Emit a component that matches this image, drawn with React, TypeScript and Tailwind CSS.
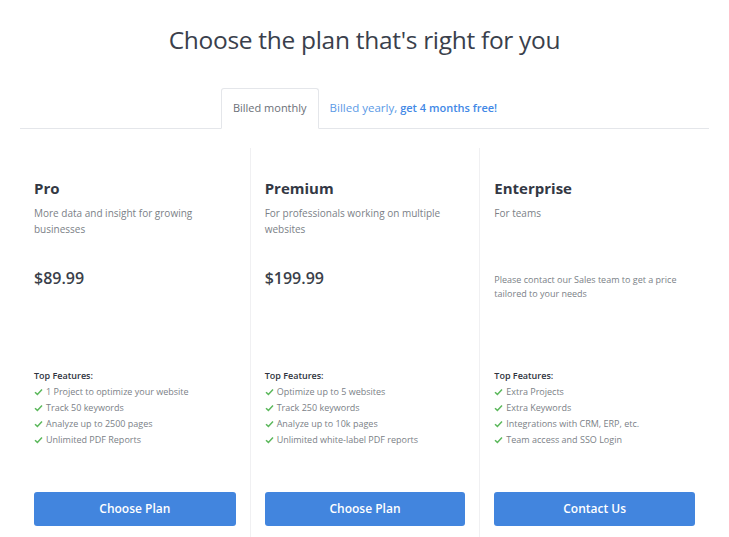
import React from "react";

type Plan = {
  name: string;
  blurb: string;
  price?: string;
  note?: string;
  features: string[];
  cta: string;
};

const PLANS: Plan[] = [
  {
    name: "Pro",
    blurb: "More data and insight for growing businesses",
    price: "$89.99",
    features: [
      "1 Project to optimize your website",
      "Track 50 keywords",
      "Analyze up to 2500 pages",
      "Unlimited PDF Reports",
    ],
    cta: "Choose Plan",
  },
  {
    name: "Premium",
    blurb: "For professionals working on multiple websites",
    price: "$199.99",
    features: [
      "Optimize up to 5 websites",
      "Track 250 keywords",
      "Analyze up to 10k pages",
      "Unlimited white-label PDF reports",
    ],
    cta: "Choose Plan",
  },
  {
    name: "Enterprise",
    blurb: "For teams",
    note: "Please contact our Sales team to get a price tailored to your needs",
    features: [
      "Extra Projects",
      "Extra Keywords",
      "Integrations with CRM, ERP, etc.",
      "Team access and SSO Login",
    ],
    cta: "Contact Us",
  },
];

function Check() {
  return (
    <svg width="9" height="8" viewBox="0 0 9 8" className="shrink-0">
      <path d="M1 4.2 L3.4 6.4 L8 1.4" fill="none" stroke="#5cb85c" strokeWidth="1.5" />
    </svg>
  );
}

function PlanColumn({ plan, first }: { plan: Plan; first: boolean }) {
  return (
    <div className={`flex flex-col px-[14px] pt-[30px] pb-[11px] ${first ? "" : "border-l border-[#f0f0f2]"}`}>
      <h2 className="text-[15px] leading-[20px] font-bold text-[#333844]">{plan.name}</h2>
      <p className="mt-[7px] h-[48px] text-[10px] leading-[16px] text-[#7b7f87]">{plan.blurb}</p>
      <div className="h-[84px]">
        {plan.price ? (
          <div className="mt-[13px] text-[16px] leading-[24px] font-semibold text-[#3b3f4a]">{plan.price}</div>
        ) : (
          <p className="mt-[20px] text-[9px] leading-[14px] text-[#7b7f87]">{plan.note}</p>
        )}
      </div>
      <div className="mt-[31px] text-[9px] leading-[16px] font-semibold text-[#2f3440]">Top Features:</div>
      <ul className="flex flex-col">
        {plan.features.map((f) => (
          <li key={f} className="flex items-center gap-[3px] text-[9px] leading-[16px] text-[#7b7f87]">
            <Check />
            {f}
          </li>
        ))}
      </ul>
      <button className="mt-[44px] h-[34px] w-full rounded-[3px] bg-[#4285de] text-[12px] font-semibold text-white">
        {plan.cta}
      </button>
    </div>
  );
}

export default function App() {
  return (
    <div className="min-h-[537px] bg-white px-5 font-['Open_Sans',sans-serif]">
      <h1 className="pt-[22px] text-center text-[24.5px] leading-[36px] text-[#3a3f4c] tracking-[-0.3px]">
        Choose the plan that's right for you
      </h1>
      <div className="mt-[30px] flex justify-center border-b border-[#e4e6ea]">
        <div className="-mb-px h-[41px] rounded-t-[3px] border border-b-white border-[#e4e6ea] bg-white px-[11px] flex items-center text-[11px] text-[#6b6f77]">
          Billed monthly
        </div>
        <div className="h-[40px] px-[11px] flex items-center text-[11.5px] text-[#5b9ae6]">
          Billed yearly,&nbsp;<span className="text-[11px] font-semibold text-[#4288e6]">get 4 months free!</span>
        </div>
      </div>
      <div className="mt-[19px] grid grid-cols-3">
        {PLANS.map((p, i) => (
          <PlanColumn key={p.name} plan={p} first={i === 0} />
        ))}
      </div>
    </div>
  );
}
